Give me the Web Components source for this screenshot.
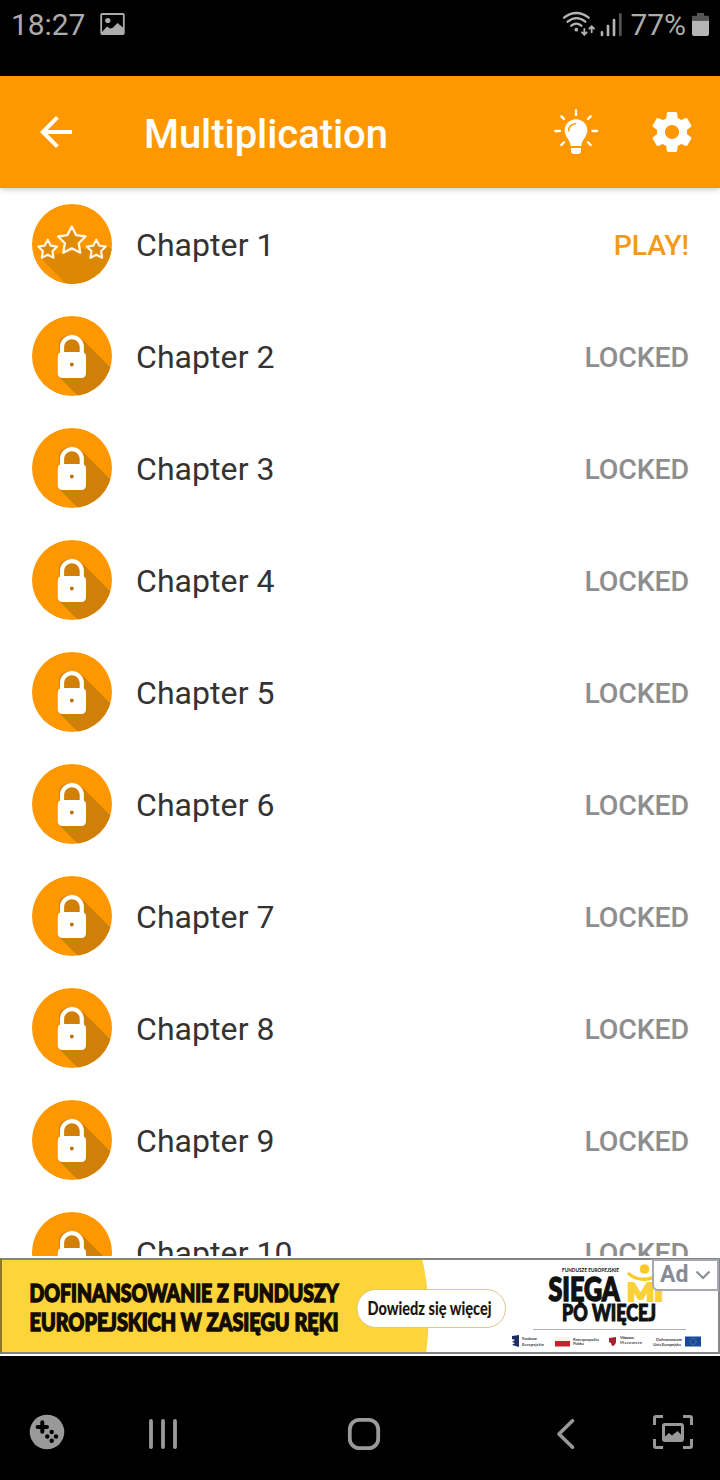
<!DOCTYPE html>
<html lang="en">
<head>
<meta charset="utf-8">
<title>Multiplication</title>
<style>
body{margin:0;background:#000;font-family:Roboto,"Liberation Sans",sans-serif}
</style>
</head>
<body>
<math-app></math-app>
<script>
const define = (name, html) => customElements.define(name, class extends HTMLElement {
  constructor() {
    super();
    const t = document.createElement('template');
    t.innerHTML = html;
    this.attachShadow({ mode: 'open' }).append(t.content.cloneNode(true));
  }
});

define('status-bar', `
<style>
:host{display:flex;box-sizing:border-box;height:76px;padding:7px 9px 0 11px;justify-content:space-between;background:#000;color:#acacac;font-size:30px;line-height:35px}
div{display:flex;align-items:flex-start}
svg{display:block}
.pic{margin:5px 0 0 15px}
.wifi{margin-top:3px}
.sig{margin:3px 9px 0 4px}
.bat{margin:5px 2px 0 6px}
span{letter-spacing:-.1px}
</style>
<div><span>18:27</span>
<svg class="pic" width="26" height="24" viewBox="0 0 26 24"><rect x="1.200" y="2" width="22.600" height="20" rx="1" fill="none" stroke="#acacac" stroke-width="1.800"/><circle cx="7.800" cy="8.500" r="2.600" fill="#acacac"/><path d="M2 20l5-5.500 3 2 2.500-.5 5-5 6 5V22H2z" fill="#acacac"/></svg></div>
<div>
<svg class="wifi" width="34" height="28" viewBox="60 30 102 84"><g fill="none" stroke="#b4b4b4" stroke-width="7" stroke-linecap="round"><path d="M66 53Q103 25 140 53M77 65Q103 44 130 65M88 77Q103 65 118 77"/><path d="M127 87v16m-7-6l7 7 7-7M149 97V80m-7 6l7-7 7 7" stroke-width="5.500"/></g><circle cx="103" cy="89" r="5.500" fill="#b4b4b4"/></svg>
<svg class="sig" width="22" height="28" viewBox="177 30 66 84"><g stroke-width="8" stroke-linecap="round" stroke="#b4b4b4"><path d="M183 97v8M201 78v27M219 60v45"/><path d="M238 43v62" stroke="#555"/></g></svg>
<span>77%</span>
<svg class="bat" width="17" height="25" viewBox="0 0 17 26" preserveAspectRatio="none"><path d="M5 1h7v3h4q1 0 1 1v4H0V5q0-1 1-1h4z" fill="#555"/><path d="M0 9h17v14q0 2-2 2H2q-2 0-2-2z" fill="#b6b6b6"/></svg>
</div>`);

define('app-bar', `
<style>
:host{display:flex;box-sizing:border-box;height:112px;padding:0 24px 0 32px;align-items:center;background:#ff9800;color:#fff;position:relative;z-index:1;box-shadow:0 1px 6px rgba(0,0,0,.24)}
h1{margin:6px auto 0 64px;font-size:40px;font-weight:500;line-height:48px;letter-spacing:-.06px}
svg{display:block}
.bulb{margin-right:48px;margin-top:-2px}
</style>
<svg width="48" height="48" viewBox="0 0 24 24" fill="#fff"><path d="M20 11H7.830l5.590-5.590L12 4l-8 8 8 8 1.410-1.410L7.830 13H20v-2z"/></svg>
<h1><slot></slot></h1>
<svg class="bulb" width="48" height="48" viewBox="66 51 144 144" fill="#fff"><path d="M138 88c-20 0-34 15-34 33 0 20 17 28 18 47h32c1-19 18-27 18-47 0-18-14-33-34-33z"/><path d="M123 174h30v9q0 9-9 9h-12q-9 0-9-9z"/><path d="M116 122q1-19 21-21" fill="none" stroke="#ff9800" stroke-width="4.500" stroke-linecap="round"/><g stroke="#fff" stroke-width="7" stroke-linecap="round"><path d="M138 61v14M76 123h14M187 123h14M94 79l8 8M182 79l-8 8M102 157l-8 8M174 157l8 8"/></g></svg>
<svg width="48" height="48" viewBox="0 0 24 24" fill="#fff"><path d="M19.430 12.980c.04-.32.07-.64.07-.98s-.03-.66-.07-.98l2.110-1.650c.19-.15.24-.42.12-.64l-2-3.460c-.12-.22-.39-.3-.61-.22l-2.490 1c-.52-.4-1.080-.73-1.690-.98l-.38-2.650C14.460 2.180 14.250 2 14 2h-4c-.25 0-.46.18-.49.42l-.38 2.650c-.61.25-1.170.59-1.690.98l-2.490-1c-.23-.09-.49 0-.61.22l-2 3.460c-.13.22-.07.49.12.64l2.110 1.650c-.04.32-.07.65-.07.98s.03.66.07.98l-2.110 1.650c-.19.15-.24.42-.12.64l2 3.460c.12.22.39.3.61.22l2.490-1c.52.4 1.080.73 1.690.98l.38 2.650c.03.24.24.42.49.42h4c.25 0 .46-.18.49-.42l.38-2.650c.61-.25 1.170-.59 1.690-.98l2.490 1c.23.09.49 0 .61-.22l2-3.460c.12-.22.07-.49-.12-.64l-2.110-1.650zM12 15.500c-1.930 0-3.500-1.570-3.500-3.500s1.570-3.500 3.500-3.500 3.500 1.570 3.500 3.500-1.570 3.500-3.500 3.500z"/></svg>`);

define('lock-badge', `
<style>:host{display:block;width:80px;height:80px;border-radius:50%;overflow:hidden}svg{display:block}</style>
<svg width="80" height="80" viewBox="0 0 80 80"><rect width="80" height="80" fill="#ff9800"/><path d="M50 23L82 55V85H51L27 61V30q0-11 13-11z" fill="#d07f08"/><path d="M30 40V31a9.900 9.900 0 0 1 19.800 0V40" fill="none" stroke="#fff" stroke-width="4.200"/><rect x="25.800" y="36" width="28.200" height="26" rx="4.500" fill="#fff"/><circle cx="39.800" cy="48.500" r="1.900" fill="#b8720c"/></svg>`);

define('stars-badge', `
<style>:host{display:block;width:80px;height:80px;border-radius:50%;overflow:hidden}svg{display:block}</style>
<svg width="80" height="80" viewBox="0 0 80 80"><defs><path id="s" d="M0-13.500L4.300-4.900 13.700-3.500 6.900 3.200 8.500 12.700 0 8.300-8.500 12.700-6.900 3.200-13.700-3.500-4.300-4.900z" stroke-linejoin="round"/></defs><rect width="80" height="80" fill="#ff9800"/><path d="M8 53.500L36 82H82V46L73 41 67 49 50 44 40 47 30 49z" fill="#dc8805"/><g fill="#e08b08" stroke="#fff6e6"><use href="#s" x="39.800" y="36" stroke-width="2.300"/><use href="#s" transform="translate(15.700 45) scale(.69)" stroke-width="3.100"/><use href="#s" transform="translate(64.300 45) scale(.69)" stroke-width="3.100"/></g></svg>`);

define('chapter-row', `
<style>
:host{display:flex;box-sizing:border-box;height:112px;flex:none;align-items:center;padding:0 31px 0 32px}
.name{margin:2px auto 0 24px;font-size:32px;line-height:38px;color:#333;letter-spacing:.06px}
.state{margin-top:4px;font-size:28.500px;line-height:34px;font-weight:500;color:#8e8e8e;letter-spacing:-.15px}
:host([open]) .state{color:#f59a18}
</style>
<slot name="badge"></slot><span class="name"><slot></slot></span><span class="state"><slot name="state"></slot></span>`);

define('ad-banner', `
<style>
:host{display:grid;grid-template-columns:352px 158px 208px;box-sizing:border-box;height:100px;border-top:2px solid #fff;border-bottom:2px solid #fff;background:#fff;position:relative}
.back{position:absolute;left:0;top:0}
svg{display:block;position:relative}
text{font-family:Lato,"Open Sans",sans-serif}
.frame{position:absolute;inset:0;border:2px solid #858585;border-left-color:#8a7727;border-right-color:#888}
.tag{position:absolute;right:1px;top:1px;width:67px;height:32px;box-sizing:border-box;border:2px solid #a4a8b0;border-radius:0 0 0 6px;background:#fff;display:flex;align-items:center;justify-content:space-between;padding:0 6px;font:700 23px/28px Roboto,sans-serif;color:#868b96}
</style>
<svg class="back" width="720" height="96" viewBox="0 0 720 96"><path d="M0 0H422Q433 48 426 96H0z" fill="#fdd538"/></svg>
<svg width="352" height="96" viewBox="0 1258 352 96"><g font-size="25" font-weight="900" fill="#140c02" stroke="#140c02" stroke-width="1.500"><text x="29.500" y="1301.500" textLength="309" lengthAdjust="spacingAndGlyphs">DOFINANSOWANIE Z FUNDUSZY</text><text x="29.500" y="1330.500" textLength="309" lengthAdjust="spacingAndGlyphs">EUROPEJSKICH W ZASIĘGU RĘKI</text></g></svg>
<svg width="158" height="96" viewBox="352 1258 158 96"><rect x="357" y="1289.500" width="148.500" height="38" rx="19" fill="#fff" stroke="#dfc58a"/><text x="367.500" y="1314.500" font-size="19" font-weight="900" fill="#1c1712" textLength="124" lengthAdjust="spacingAndGlyphs">Dowiedz się więcej</text></svg>
<svg width="208" height="96" viewBox="510 1258 208 96"><g fill="#111"><text x="562" y="1272" font-size="6" font-weight="700" textLength="57" lengthAdjust="spacingAndGlyphs">FUNDUSZE EUROPEJSKIE</text><g font-weight="900" stroke="#111" stroke-width="1.600"><text x="548.500" y="1301" font-size="33" textLength="71" lengthAdjust="spacingAndGlyphs">SIĘGA</text><text x="562" y="1320.500" font-size="22" stroke-width="1.100" textLength="94" lengthAdjust="spacingAndGlyphs">PO WIĘCEJ</text></g></g>
<text x="627" y="1300.500" font-size="24" font-weight="900" fill="#fbd13a" stroke="#fbd13a" stroke-width="2.200" textLength="36" lengthAdjust="spacingAndGlyphs">MI</text><circle cx="644.500" cy="1269" r="4.800" fill="#fbc92c"/><path d="M629 1274q10 8 23 4" fill="none" stroke="#fbc92c" stroke-width="3.500" stroke-linecap="round"/>
<path d="M533 1329.500h153" stroke="#b5afa8"/>
<path d="M512 1336l7-1v12l-7-2 3-2-3-1 3-2-3-1z" fill="#1c2c63"/><path d="M555 1337h15v4h-15z" fill="#f5f2f2"/><path d="M555 1341h15v5.500h-15z" fill="#c9202b"/><path d="M609 1338l7-1v5q-1 4-4 4l-1-3-2-1z" fill="#a52031"/><rect x="685" y="1336.500" width="16" height="10" fill="#174a9b"/><circle cx="693" cy="1341.500" r="3" fill="none" stroke="#9da969" stroke-dasharray=".8 1.100"/>
<g font-size="4.200" font-weight="700" fill="#4a4a4e"><text x="522" y="1340" textLength="15">Fundusze</text><text x="522" y="1345.500" textLength="22">Europejskie</text><text x="573" y="1341" textLength="26">Rzeczpospolita</text><text x="573" y="1345" textLength="11">Polska</text><text x="620" y="1339" textLength="14">Warszawa</text><text x="620" y="1343.500" textLength="22">Mazowsze</text><text x="656" y="1341" textLength="26">Dofinansowane</text><text x="653" y="1346" textLength="28">Unia Europejska</text></g></svg>
<div class="frame"></div>
<div class="tag"><span>Ad</span><svg width="16" height="10" viewBox="0 0 16 10"><path d="M1.500 1.500L8 8l6.500-6.500" fill="none" stroke="#868b96" stroke-width="2"/></svg></div>`);

define('nav-bar', `
<style>
:host{display:grid;grid-template-columns:94px 138px 264px 140px 74px;box-sizing:border-box;height:124px;padding-top:32px;background:#000;justify-items:center;align-items:center}
svg{display:block}
.up{margin-top:-4px}
</style>
<svg class="up" width="36" height="36" viewBox="0 0 36 36"><circle cx="18" cy="18" r="17.300" fill="#999"/><path d="M13.300 8.300v9.400M8.600 13h9.400" stroke="#000" stroke-width="4" stroke-linecap="round"/><circle cx="22.700" cy="18" r="2.200"/><circle cx="18.300" cy="22.500" r="2.200"/><circle cx="27" cy="22.500" r="2.200"/><circle cx="22.700" cy="26.800" r="2.200"/></svg>
<svg width="30" height="32" viewBox="0 0 30 32"><path d="M3 3v26M15 3v26M27 3v26" stroke="#999" stroke-width="3.800" stroke-linecap="round"/></svg>
<svg width="34" height="34" viewBox="0 0 34 34"><rect x="2.800" y="2.800" width="28.400" height="28.400" rx="9.500" fill="none" stroke="#999" stroke-width="3.800"/></svg>
<svg width="20" height="32" viewBox="0 0 20 32"><path d="M16.500 2.800L3 16l13.500 13.200" fill="none" stroke="#999" stroke-width="3.600" stroke-linecap="round" stroke-linejoin="round"/></svg>
<svg class="up" width="40" height="34" viewBox="0 0 40 34"><path d="M1.500 10V3Q1.500 1.500 3 1.500h7M30 1.500h7q1.500 0 1.500 1.500v7M38.500 24v7q0 1.500-1.500 1.500h-7M10 32.500H3Q1.500 32.500 1.500 31v-7" fill="none" stroke="#999" stroke-width="3"/><rect x="10.500" y="9.500" width="19" height="16" rx="1.500" fill="none" stroke="#999" stroke-width="3"/><path d="M11 22.500l5-4.500 3 2.500 5.500-4.500 5 5V26H11z" fill="#999"/></svg>`);

define('math-app', `
<style>
:host{display:flex;flex-direction:column;width:720px;height:1480px;background:#000}
main{display:flex;flex-direction:column;height:1068px;overflow:hidden;background:#fff}
status-bar,app-bar,ad-banner,nav-bar{flex:none}
</style>
<status-bar></status-bar>
<app-bar>Multiplication</app-bar>
<main>
<chapter-row open><stars-badge slot="badge"></stars-badge>Chapter 1<span slot="state">PLAY!</span></chapter-row>
${[2,3,4,5,6,7,8,9,10].map(n => `<chapter-row><lock-badge slot="badge"></lock-badge>Chapter ${n}<span slot="state">LOCKED</span></chapter-row>`).join('')}
</main>
<ad-banner></ad-banner>
<nav-bar></nav-bar>`);
</script>
</body>
</html>
